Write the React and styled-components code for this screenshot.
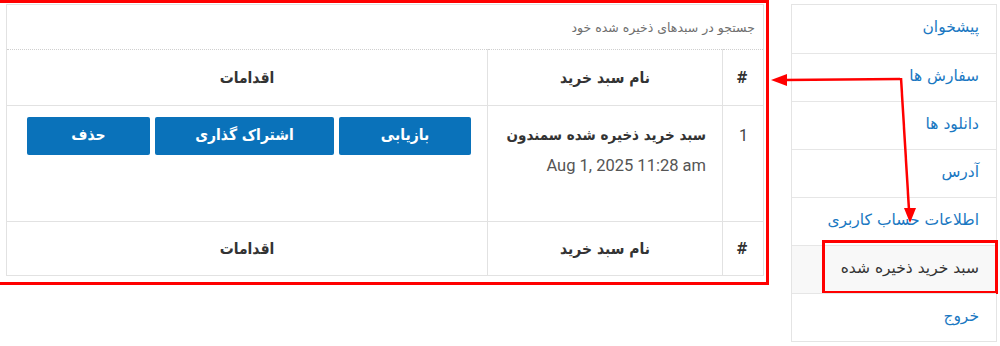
import styled, { createGlobalStyle } from "styled-components";

const GlobalStyle = createGlobalStyle`
  html, body {
    margin: 0;
    padding: 0;
    background: #fff;
  }
  body {
    font-family: Roboto, "DejaVu Sans", sans-serif;
    color: #333;
  }
`;

const boldFont = `"DejaVu Sans Condensed", "DejaVu Sans", sans-serif`;

const Page = styled.div`
  position: relative;
  direction: rtl;
  display: flex;
  align-items: flex-start;
  gap: 22px;
  width: 1000px;
  height: 346px;
  box-sizing: border-box;
  padding-right: 3px;
  overflow: hidden;
`;

const Sidebar = styled.ul`
  list-style: none;
  margin: 4px 0 0;
  padding: 0;
  width: 206px;
  flex: none;
  box-sizing: border-box;
  border: 1px solid #e4e4e4;
`;

const NavItem = styled.li`
  position: relative;
  height: 48px;
  display: flex;
  align-items: center;
  padding: 0 17px 4px 0;
  font-family: "DejaVu Sans", sans-serif;
  font-size: 15.5px;
  color: ${(p) => (p.$active ? "#333" : "#1a78c2")};
  background: ${(p) => (p.$active ? "#f8f8f8" : "#fff")};
  border-top: ${(p) => (p.$first ? "none" : "1px solid #e6e6e6")};
  box-sizing: border-box;
`;

const Highlight = styled.span`
  position: absolute;
  top: -6px;
  right: -2px;
  bottom: -1px;
  left: 30px;
  border: 3px solid #f00;
  pointer-events: none;
`;

const Frame = styled.section`
  flex: 1;
  border: 3px solid #f00;
  border-left: 0;
  padding: 1px 2px 6px 6px;
  box-sizing: border-box;
`;

const Table = styled.table`
  width: 100%;
  border-collapse: collapse;
  border: 1px solid #e2e2e2;
  table-layout: fixed;

  td,
  th {
    box-sizing: border-box;
  }
`;

const SearchCell = styled.td`
  height: 45px;
  padding: 0 8px 2px;
  border-bottom: 1px dotted #cfcfcf;
`;

const SearchInput = styled.input`
  width: 100%;
  padding: 0;
  border: 0;
  outline: 0;
  background: transparent;
  direction: rtl;
  font-family: "DejaVu Sans", sans-serif;
  font-size: 12.5px;
  color: #666;
  &::placeholder {
    color: #6f6f6f;
  }
`;

const Head = styled.th`
  height: ${(p) => p.$h || 56}px;
  padding: 0 15px;
  font-family: ${boldFont};
  font-size: 15.5px;
  font-weight: bold;
  color: #333;
  text-align: ${(p) => (p.$start ? "right" : "center")};
  border: 1px solid #e2e2e2;
  border-top-style: ${(p) => (p.$dotted ? "dotted" : "solid")};
`;

const Cell = styled.td`
  height: 116px;
  padding: ${(p) => p.$pad || "18px 16px 0"};
  vertical-align: top;
  text-align: right;
  border: 1px solid #e2e2e2;
  font-size: 16px;
  color: #444;
`;

const CartName = styled.div`
  font-family: ${boldFont};
  font-weight: bold;
  font-size: 15px;
  color: #333;
  line-height: 22px;
  white-space: nowrap;
`;

const CartDate = styled.div`
  margin-top: 10px;
  font-size: 16.5px;
  color: #555;
  direction: ltr;
  text-align: right;
`;

const Actions = styled.div`
  display: flex;
  gap: 5px;
`;

const Button = styled.button`
  width: ${(p) => p.$w}px;
  height: 38px;
  padding: 0 0 3px;
  border: 0;
  border-radius: 2px;
  background: #0a72ba;
  color: #fff;
  font-family: ${boldFont};
  font-weight: bold;
  font-size: 15.5px;
  cursor: pointer;
`;

const Annotations = styled.svg`
  position: absolute;
  top: 0;
  left: 0;
  pointer-events: none;
`;

const navItems = [
  "پیشخوان",
  "سفارش ها",
  "دانلود ها",
  "آدرس",
  "اطلاعات حساب کاربری",
  "سبد خرید ذخیره شده",
  "خروج",
];

const App = () => (
  <>
    <GlobalStyle />
    <Page>
      <Sidebar>
        {navItems.map((item, i) => (
          <NavItem key={item} $first={i === 0} $active={i === 5}>
            {item}
            {i === 5 && <Highlight />}
          </NavItem>
        ))}
      </Sidebar>

      <Frame>
        <Table>
          <colgroup>
            <col style={{ width: 41 }} />
            <col style={{ width: 235 }} />
            <col />
          </colgroup>
          <tbody>
            <tr>
              <SearchCell colSpan={3}>
                <SearchInput placeholder="جستجو در سبدهای ذخیره شده خود" />
              </SearchCell>
            </tr>
            <tr>
              <Head $start $dotted>#</Head>
              <Head $dotted>نام سبد خرید</Head>
              <Head $dotted>اقدامات</Head>
            </tr>
            <tr>
              <Cell $pad="20px 15px 0">1</Cell>
              <Cell>
                <CartName>سبد خرید ذخیره شده سمندون</CartName>
                <CartDate>Aug 1, 2025 11:28 am</CartDate>
              </Cell>
              <Cell $pad="11px 16px 0">
                <Actions>
                  <Button $w={132}>بازیابی</Button>
                  <Button $w={179}>اشتراک گذاری</Button>
                  <Button $w={123}>حذف</Button>
                </Actions>
              </Cell>
            </tr>
            <tr>
              <Head $start $h={54}>#</Head>
              <Head $h={54}>نام سبد خرید</Head>
              <Head $h={54}>اقدامات</Head>
            </tr>
          </tbody>
        </Table>
      </Frame>

      <Annotations width="1000" height="346" viewBox="0 0 1000 346">
        <g fill="#f00" stroke="#f00" strokeWidth="2.5">
          <line x1="900" y1="79" x2="784" y2="80" />
          <polygon points="771,80 787,74 787,86" strokeWidth="0" />
          <line x1="901" y1="78" x2="909" y2="210" />
          <polygon points="910,223 904,208 916,208" strokeWidth="0" />
        </g>
      </Annotations>
    </Page>
  </>
);

export default App;
